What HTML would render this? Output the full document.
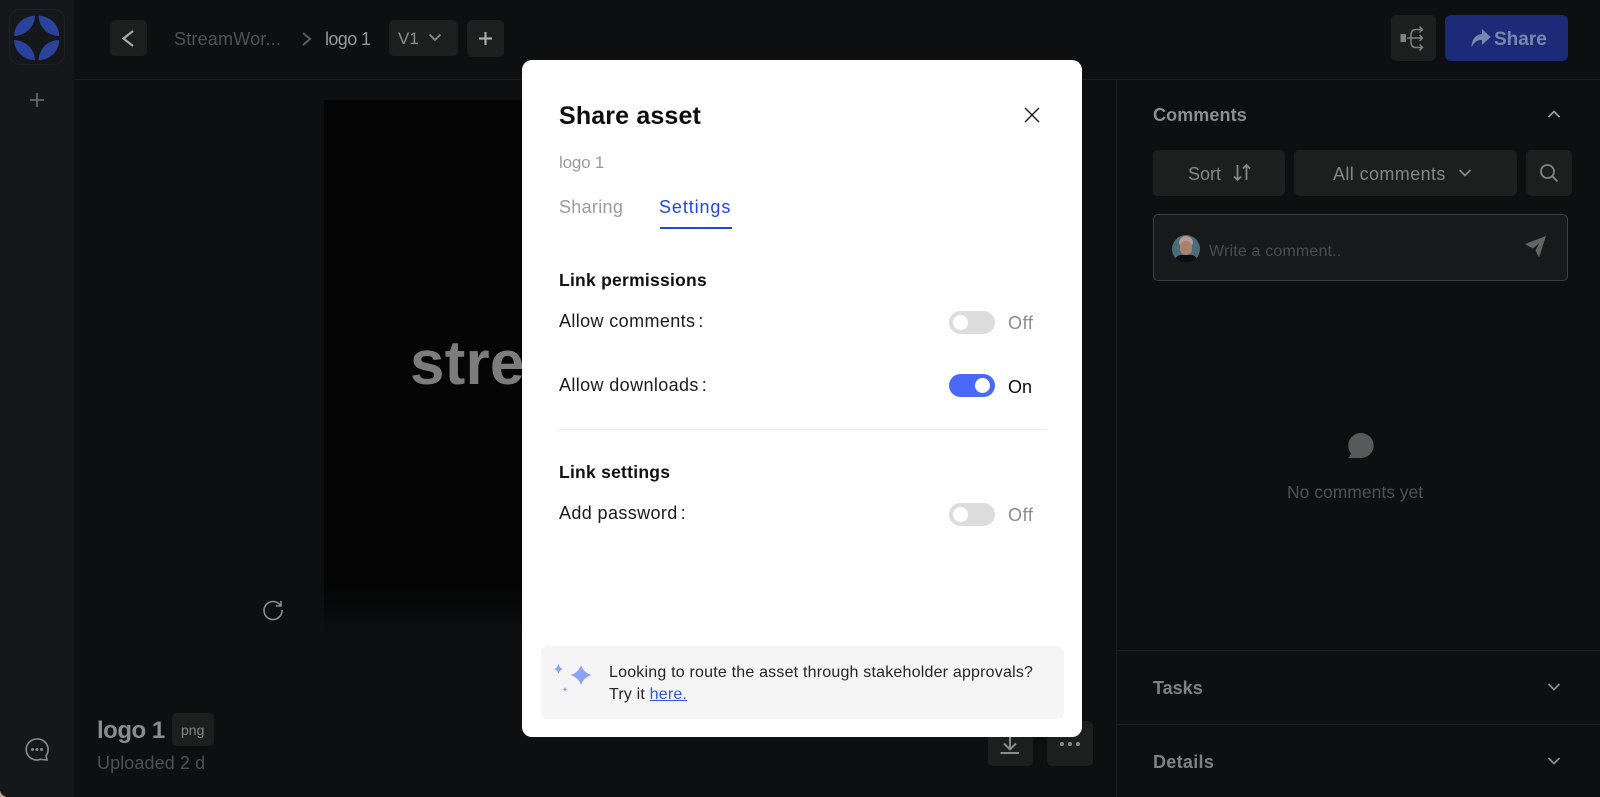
<!DOCTYPE html>
<html lang="en"><head><meta charset="utf-8"><title>Share asset</title>
<style>
html,body{margin:0;padding:0;width:1600px;height:797px;overflow:hidden;background:#b9a68c}
*{box-sizing:border-box}
#app{position:absolute;left:0;top:0;width:1600px;height:797px;background:#0d0f11;border-bottom-left-radius:8px;overflow:hidden;font-family:"Liberation Sans",sans-serif}
.a{position:absolute}
.t{position:absolute;white-space:nowrap;height:24px;line-height:24px}
.b{position:absolute;background:#1c1f1e;border-radius:5px}
svg{position:absolute;overflow:visible}
.sw{position:absolute;left:949px;width:46px;height:23px;border-radius:12px;background:#dcdcdc}
.sw i{position:absolute;top:4px;left:4px;width:15px;height:15px;border-radius:50%;background:#fff}
.sw.on{background:#4a69f6}
.sw.on i{left:26px}
.r{font-size:18px;color:#1c1c1c;letter-spacing:.38px}
.h{font-size:17.500px;font-weight:700;color:#111;letter-spacing:.25px}
</style></head><body>
<div id="app">
<!-- sidebar -->
<div class="a" style="left:0;top:0;width:74px;height:797px;background:#15171a"></div>
<div class="a" style="left:9px;top:9px;width:56px;height:56px;border:1px solid #1f2124;border-radius:11px"></div>
<svg style="left:0;top:0" width="74" height="80" fill="#2a429b">
<path d="M35 15.500C23 16.500 14 25 14.200 36C26 35.500 34.500 27 35 15.500Z"/>
<path d="M38.500 15.500C51 16.500 59 25 59.200 36C47 35.500 39 27 38.500 15.500Z"/>
<path d="M14.200 40C14 51 23 59.500 35 60.300C34.500 49 26 40.500 14.200 40Z"/>
<path d="M59.200 40C59 51 51 59.500 38.500 60.300C39 49 47 40.500 59.200 40Z"/>
</svg>
<svg style="left:29px;top:92px" width="16" height="16" stroke="#5d5e5f" stroke-width="2"><path d="M8 1V15M1 8H15"/></svg>
<svg style="left:25px;top:737px" width="24" height="24" fill="none" stroke="#8b8c8c" stroke-width="1.600"><path d="M12 2A10.500 10.500 0 1 0 15.500 22.300L22 23L21 18.800A10.500 10.500 0 0 0 12 2Z"/><circle cx="7.500" cy="12.500" r=".7" fill="#8b8c8c"/><circle cx="12" cy="12.500" r=".7" fill="#8b8c8c"/><circle cx="16.500" cy="12.500" r=".7" fill="#8b8c8c"/></svg>

<!-- header -->
<div class="a" style="left:74px;top:79px;width:1526px;height:1px;background:#1a1c1e"></div>
<div class="b" style="left:110px;top:20px;width:37px;height:36px"></div>
<svg style="left:110px;top:20px" width="37" height="36" fill="none" stroke="#a9aaa9" stroke-width="2.200"><path d="M23 11L13.500 18.500L23 26"/></svg>
<div class="t" style="left:174px;top:27px;font-size:18px;color:#505152;letter-spacing:.2px">StreamWor...</div>
<svg style="left:301px;top:29px" width="12" height="20" fill="none" stroke="#5a5b5b" stroke-width="2"><path d="M2 4L9 10L2 16"/></svg>
<div class="t" style="left:325px;top:27px;font-size:18px;color:#969797;letter-spacing:-.6px">logo 1</div>
<div class="b" style="left:389px;top:20px;width:69px;height:36px"></div>
<div class="t" style="left:398px;top:27px;font-size:17px;color:#8c8d8d">V1</div>
<svg style="left:428px;top:32px" width="14" height="12" fill="none" stroke="#8c8d8d" stroke-width="1.800"><path d="M1.500 2.500L7 8L12.500 2.500"/></svg>
<div class="b" style="left:467px;top:20px;width:37px;height:37px"></div>
<svg style="left:478px;top:31px" width="15" height="15" stroke="#a9aaa9" stroke-width="2.200"><path d="M7.500 1V14M1 7.500H14"/></svg>
<div class="b" style="left:1391px;top:15px;width:45px;height:46px"></div>
<svg style="left:1400px;top:25px" width="26" height="26" fill="none" stroke="#7f8080" stroke-width="1.500"><rect x=".5" y="9" width="5.500" height="8" fill="#7f8080" stroke="none"/><path d="M22 4.500H16Q11 4.500 11 10V17Q11 22.500 16 22.500H22M7 13H22M19.500 1.500L22.500 4.500L19.500 7.500M19.500 10L22.500 13L19.500 16M19.500 19.500L22.500 22.500L19.500 25.500"/></svg>
<div class="a" style="left:1445px;top:15px;width:123px;height:46px;background:#1c2b78;border-radius:6px"></div>
<svg style="left:1471px;top:29px" width="20" height="19" fill="#7b86ae"><path d="M11 0L19.500 8L11 16V11Q4 10.500 .5 18.500Q.5 6.500 11 5Z"/></svg>
<div class="t" style="left:1494px;top:28px;font-size:19px;font-weight:700;color:#7b86ae">Share</div>

<!-- stage -->
<div class="a" style="left:324px;top:100px;width:560px;height:540px;background:linear-gradient(#050505 0,#050505 90%,#0d0f11 100%)"></div>
<div class="t" style="left:410px;top:324px;height:80px;line-height:80px;font-size:62px;font-weight:700;color:#7c7c7c;letter-spacing:.2px">stream</div>
<svg style="left:263px;top:600px" width="20" height="20" fill="none" stroke="#8d8e8e" stroke-width="1.600"><path d="M17.500 5.500A9 9 0 1 0 19 10"/><path d="M13 6H18V1" /></svg>
<div class="t" style="left:97px;top:719px;font-size:24px;font-weight:700;color:#8b8c8c;letter-spacing:-.5px">logo 1</div>
<div class="b" style="left:172px;top:713px;width:42px;height:33px"></div>
<div class="t" style="left:181px;top:718px;font-size:14px;color:#858686">png</div>
<div class="t" style="left:97px;top:751px;font-size:18px;color:#4f5051;letter-spacing:.1px">Uploaded 2 d</div>
<div class="b" style="left:988px;top:721px;width:45px;height:45px"></div>
<svg style="left:999px;top:735px" width="22" height="22" fill="none" stroke="#8a8b8b" stroke-width="2"><path d="M11 1V14.500M5 8.500L11 14.500L17 8.500M1.500 18H20"/></svg>
<div class="b" style="left:1047px;top:721px;width:46px;height:45px"></div>
<svg style="left:1059px;top:741px" width="22" height="6" fill="#8a8b8b"><circle cx="3" cy="3" r="2"/><circle cx="11" cy="3" r="2"/><circle cx="19" cy="3" r="2"/></svg>

<!-- right panel -->
<div class="a" style="left:1116px;top:80px;width:1px;height:717px;background:#1a1c1e"></div>
<div class="t" style="left:1153px;top:103px;font-size:18px;font-weight:700;color:#8c8d8d;letter-spacing:.1px">Comments</div>
<svg style="left:1547px;top:108px" width="14" height="12" fill="none" stroke="#9a9b9b" stroke-width="1.800"><path d="M1.500 9L7 3.500L12.500 9"/></svg>
<div class="b" style="left:1153px;top:150px;width:132px;height:46px"></div>
<div class="t" style="left:1188px;top:162px;font-size:18px;color:#858686">Sort</div>
<svg style="left:1233px;top:164px" width="18" height="18" fill="none" stroke="#858686" stroke-width="1.800"><path d="M4.500 1V16M1 12.500L4.500 16L8 12.500M13.500 16V1M10 4.500L13.500 1L17 4.500"/></svg>
<div class="b" style="left:1294px;top:150px;width:223px;height:46px"></div>
<div class="t" style="left:1333px;top:162px;font-size:18px;color:#858686;letter-spacing:.4px">All comments</div>
<svg style="left:1458px;top:167px" width="14" height="12" fill="none" stroke="#858686" stroke-width="1.800"><path d="M1.500 3L7 8.500L12.500 3"/></svg>
<div class="b" style="left:1526px;top:150px;width:46px;height:46px"></div>
<svg style="left:1540px;top:164px" width="18" height="18" fill="none" stroke="#858686" stroke-width="1.800"><circle cx="7.500" cy="7.500" r="6.500"/><path d="M12.300 12.300L17.500 17.500"/></svg>
<div class="a" style="left:1153px;top:214px;width:415px;height:67px;background:#17191b;border:1px solid #3c3e40;border-radius:5px"></div>
<div class="a" style="left:1172px;top:235px;width:28px;height:28px;border-radius:50%;overflow:hidden;background:#4a6c78">
<div class="a" style="left:7px;top:1px;width:14px;height:9px;border-radius:7px 7px 2px 2px;background:#b59a94"></div>
<div class="a" style="left:8px;top:6px;width:12px;height:14px;border-radius:6px;background:#a8826d"></div>
<div class="a" style="left:3px;top:20px;width:22px;height:12px;border-radius:8px;background:#0b0d0e"></div></div>
<div class="t" style="left:1209px;top:240px;font-size:16px;color:#4b4c4d;letter-spacing:.17px">Write a comment..</div>
<svg style="left:1525px;top:236px" width="21" height="22" fill="#636464"><path d="M21 0L0 8L8 12.500L14 7.500L10.500 14.500L14 21.500Z"/></svg>
<svg style="left:1348px;top:433px" width="26" height="25" fill="#585959"><path d="M13 0A12.700 12.500 0 0 1 13 25H0Q3 22.500 2.800 20A12.700 12.500 0 0 1 13 0Z"/></svg>
<div class="t" style="left:1287px;top:480px;font-size:17.500px;color:#4f5051">No comments yet</div>
<div class="a" style="left:1116px;top:650px;width:484px;height:1px;background:#1d1f21"></div>
<div class="t" style="left:1153px;top:676px;font-size:18px;font-weight:700;color:#7f8080">Tasks</div>
<svg style="left:1547px;top:681px" width="14" height="12" fill="none" stroke="#8c8d8d" stroke-width="1.800"><path d="M1.500 3L7 8.500L12.500 3"/></svg>
<div class="a" style="left:1116px;top:724px;width:484px;height:1px;background:#1d1f21"></div>
<div class="t" style="left:1153px;top:750px;font-size:18px;font-weight:700;color:#7f8080;letter-spacing:.3px">Details</div>
<svg style="left:1547px;top:755px" width="14" height="12" fill="none" stroke="#8c8d8d" stroke-width="1.800"><path d="M1.500 3L7 8.500L12.500 3"/></svg>

<!-- modal -->
<div class="a" style="left:522px;top:60px;width:560px;height:677px;background:#fff;border-radius:10px"></div>
<div class="t" style="left:559px;top:104px;font-size:25px;font-weight:700;color:#0d0d0d;letter-spacing:.15px">Share asset</div>
<svg style="left:1024px;top:107px" width="16" height="16" fill="none" stroke="#111" stroke-width="1.300"><path d="M1 1L15 15M15 1L1 15"/></svg>
<div class="t" style="left:559px;top:151px;font-size:17px;color:#9b9b9b;letter-spacing:-.2px">logo 1</div>
<div class="t" style="left:559px;top:195px;font-size:18px;color:#9b9b9b;letter-spacing:.3px">Sharing</div>
<div class="t" style="left:659px;top:195px;font-size:18px;color:#1e46e6;letter-spacing:.9px">Settings</div>
<div class="a" style="left:660px;top:227px;width:72px;height:2px;background:#1e46e6"></div>
<div class="t h" style="left:559px;top:268px">Link permissions</div>
<div class="t r" style="left:559px;top:309px">Allow comments<span style="margin-left:3px">:</span></div>
<div class="sw" style="top:311px"><i></i></div>
<div class="t" style="left:1008px;top:311px;font-size:18px;color:#8a8a8a;letter-spacing:.6px">Off</div>
<div class="t r" style="left:559px;top:373px">Allow downloads<span style="margin-left:3px">:</span></div>
<div class="sw on" style="top:374px"><i></i></div>
<div class="t" style="left:1008px;top:375px;font-size:18px;color:#0a0a0a">On</div>
<div class="a" style="left:559px;top:429px;width:487px;height:1px;background:#e9e9e9"></div>
<div class="t h" style="left:559px;top:460px">Link settings</div>
<div class="t r" style="left:559px;top:501px">Add password<span style="margin-left:3px">:</span></div>
<div class="sw" style="top:503px"><i></i></div>
<div class="t" style="left:1008px;top:503px;font-size:18px;color:#8a8a8a;letter-spacing:.6px">Off</div>
<div class="a" style="left:541px;top:646px;width:523px;height:73px;background:#f5f5f5;border-radius:7px"></div>
<svg style="left:550px;top:660px" width="45" height="40" fill="#8ea2f4"><path d="M31 5Q33.500 12.500 41.500 15Q33.500 17.500 31 25Q28.500 17.500 20.500 15Q28.500 12.500 31 5Z"/><path d="M8.500 4Q9.500 8 13 9Q9.500 10 8.500 14Q7.500 10 4 9Q7.500 8 8.500 4Z"/><path d="M15 27Q15.500 29 17.500 29.500Q15.500 30 15 32Q14.500 30 12.500 29.500Q14.500 29 15 27Z"/></svg>
<div class="t" style="left:609px;top:661px;font-size:16px;color:#262626;letter-spacing:.2px">Looking to route the asset through stakeholder approvals?</div>
<div class="t" style="left:609px;top:683px;font-size:16px;color:#262626;letter-spacing:.18px">Try it <span style="color:#2f55e8;text-decoration:underline">here.</span></div>
</div>
</body></html>
